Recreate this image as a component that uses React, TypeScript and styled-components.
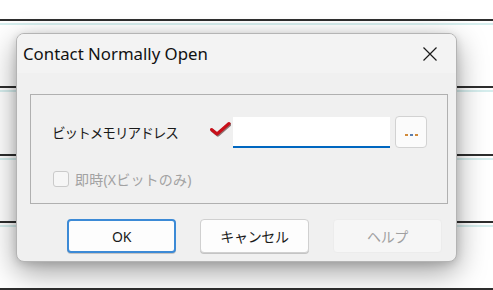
import styled, { createGlobalStyle } from 'styled-components';

const GlobalStyle = createGlobalStyle`
  html, body {
    margin: 0;
    padding: 0;
    background: #ffffff;
  }
  body {
    font-family: "Noto Sans", "Noto Sans CJK JP", sans-serif;
    color: #1a1a1a;
  }
`;

function CheckMark() {
  return (
    <svg width="22" height="16" viewBox="0 0 22 16">
      <path d="M2.5 8.5 L8 13 L20 2.5" fill="none" stroke="#3a1010" strokeWidth="3.4" strokeLinecap="round" strokeLinejoin="round" transform="translate(0.8 1)" opacity="0.55" />
      <path d="M2.5 8.5 L8 13 L20 2.5" fill="none" stroke="#c8101a" strokeWidth="3" strokeLinecap="round" strokeLinejoin="round" />
    </svg>
  );
}

function CloseIcon() {
  return (
    <svg width="16" height="16" viewBox="0 0 16 16">
      <path d="M1.5 1.5 L14.5 14.5 M14.5 1.5 L1.5 14.5" stroke="#1a1a1a" strokeWidth="1.2" />
    </svg>
  );
}

function App() {
  const rows = [0, 1, 2, 3, 4];

  return (
    <>
      <GlobalStyle />
      <Desktop>
        <Backdrop>
          <TopGap />
          {rows.map((r) => (
            <GridRow key={r}>
              <DarkLine />
              <CyanLine />
            </GridRow>
          ))}
        </Backdrop>

        <Dialog>
          <TitleBar>
            <Title>Contact Normally Open</Title>
            <CloseButton aria-label="close">
              <CloseIcon />
            </CloseButton>
          </TitleBar>

          <Body>
            <GroupBox>
              <FieldRow>
                <FieldLabel>ビットメモリアドレス</FieldLabel>
                <MarkSlot>
                  <CheckMark />
                </MarkSlot>
                <AddressInput />
                <BrowseButton>
                  <Dot $color="#d08a3a" />
                  <Dot $color="#5a7fb0" />
                  <Dot $color="#d08a3a" />
                </BrowseButton>
              </FieldRow>
              <CheckRow>
                <CheckBox />
                <CheckLabel>即時(Xビットのみ)</CheckLabel>
              </CheckRow>
            </GroupBox>

            <ButtonRow>
              <DialogButton $primary>OK</DialogButton>
              <DialogButton>キャンセル</DialogButton>
              <DialogButton $disabled>ヘルプ</DialogButton>
            </ButtonRow>
          </Body>
        </Dialog>
      </Desktop>
    </>
  );
}

const Desktop = styled.div`
  position: relative;
  width: 493px;
  height: 290px;
  overflow: hidden;
  background: #ffffff;
`;

const Backdrop = styled.div`
  display: flex;
  flex-direction: column;
`;

const TopGap = styled.div`
  height: 19px;
`;

const GridRow = styled.div`
  height: 67.3px;
  display: flex;
  flex-direction: column;
`;

const DarkLine = styled.div`
  height: 2px;
  background: #2e2e2e;
  margin-bottom: 2px;
`;

const CyanLine = styled.div`
  height: 2px;
  background: #d6eeee;
`;

const Dialog = styled.div`
  position: absolute;
  left: 16px;
  top: 33px;
  width: 441px;
  height: 229px;
  box-sizing: border-box;
  border: 1px solid #b4b4b4;
  border-radius: 8px;
  background: #f0f0f0;
  box-shadow: 0 10px 30px rgba(0, 0, 0, 0.38), 0 2px 8px rgba(0, 0, 0, 0.14);
  display: flex;
  flex-direction: column;
  overflow: hidden;
`;

const TitleBar = styled.div`
  height: 39px;
  flex-shrink: 0;
  display: flex;
  align-items: center;
  justify-content: space-between;
  padding: 0 16px 0 6px;
  background: #f3f3f3;
`;

const Title = styled.span`
  font-size: 16.8px;
  color: #111;
`;

const CloseButton = styled.button`
  display: flex;
  align-items: center;
  justify-content: center;
  width: 20px;
  height: 20px;
  padding: 0;
  border: none;
  background: transparent;
`;

const Body = styled.div`
  flex: 1;
  display: flex;
  flex-direction: column;
  padding: 21px 8px 0 13px;
`;

const GroupBox = styled.div`
  height: 110px;
  box-sizing: border-box;
  border: 1px solid #b0b0b0;
  display: flex;
  flex-direction: column;
  padding: 20px 20px 0 21px;
`;

const FieldRow = styled.div`
  display: flex;
  align-items: center;
  height: 33px;
`;

const FieldLabel = styled.span`
  font-size: 13.6px;
  color: #1a1a1a;
  width: 157px;
  letter-spacing: -1px;
`;

const MarkSlot = styled.div`
  width: 24px;
  display: flex;
  align-items: center;
  margin-top: -6px;
`;

const AddressInput = styled.div`
  width: 157px;
  height: 31px;
  box-sizing: border-box;
  background: #ffffff;
  border-bottom: 2px solid #0067c0;
  margin-top: 2px;
`;

const BrowseButton = styled.div`
  width: 32px;
  height: 32px;
  margin-left: 5px;
  box-sizing: border-box;
  border: 1px solid #d2d2d2;
  border-radius: 4px;
  background: #fbfbfb;
  display: flex;
  align-items: flex-end;
  justify-content: center;
  gap: 2px;
  padding-bottom: 11px;
`;

const Dot = styled.span<{ $color: string }>`
  width: 3px;
  height: 2px;
  background: ${(p) => p.$color};
`;

const CheckRow = styled.div`
  display: flex;
  align-items: center;
  gap: 6px;
  margin-top: 21px;
  margin-left: 1px;
`;

const CheckBox = styled.span`
  width: 16px;
  height: 16px;
  box-sizing: border-box;
  border: 1px solid #cacaca;
  border-radius: 3px;
  background: #f6f6f6;
`;

const CheckLabel = styled.span`
  font-size: 14px;
  color: #a2a2a2;
  letter-spacing: 0.2px;
`;

const ButtonRow = styled.div`
  display: flex;
  gap: 24px;
  padding-left: 37px;
  margin-top: 15px;
`;

const DialogButton = styled.button<{ $primary?: boolean; $disabled?: boolean }>`
  width: 109px;
  height: 34px;
  box-sizing: border-box;
  border-radius: 4px;
  font-family: "Noto Sans", "Noto Sans CJK JP", sans-serif;
  font-size: 14px;
  border: ${(p) =>
    p.$primary ? '2px solid #3c8ad6' : p.$disabled ? '1px solid #ececec' : '1px solid #d0d0d0'};
  background: ${(p) => (p.$disabled ? '#f6f6f6' : '#fdfdfd')};
  color: ${(p) => (p.$disabled ? '#a0a0a0' : '#1a1a1a')};
  box-shadow: ${(p) => (p.$disabled ? 'none' : '0 1px 0 #c4c4c4')};
  letter-spacing: -0.3px;
`;

export default App;
